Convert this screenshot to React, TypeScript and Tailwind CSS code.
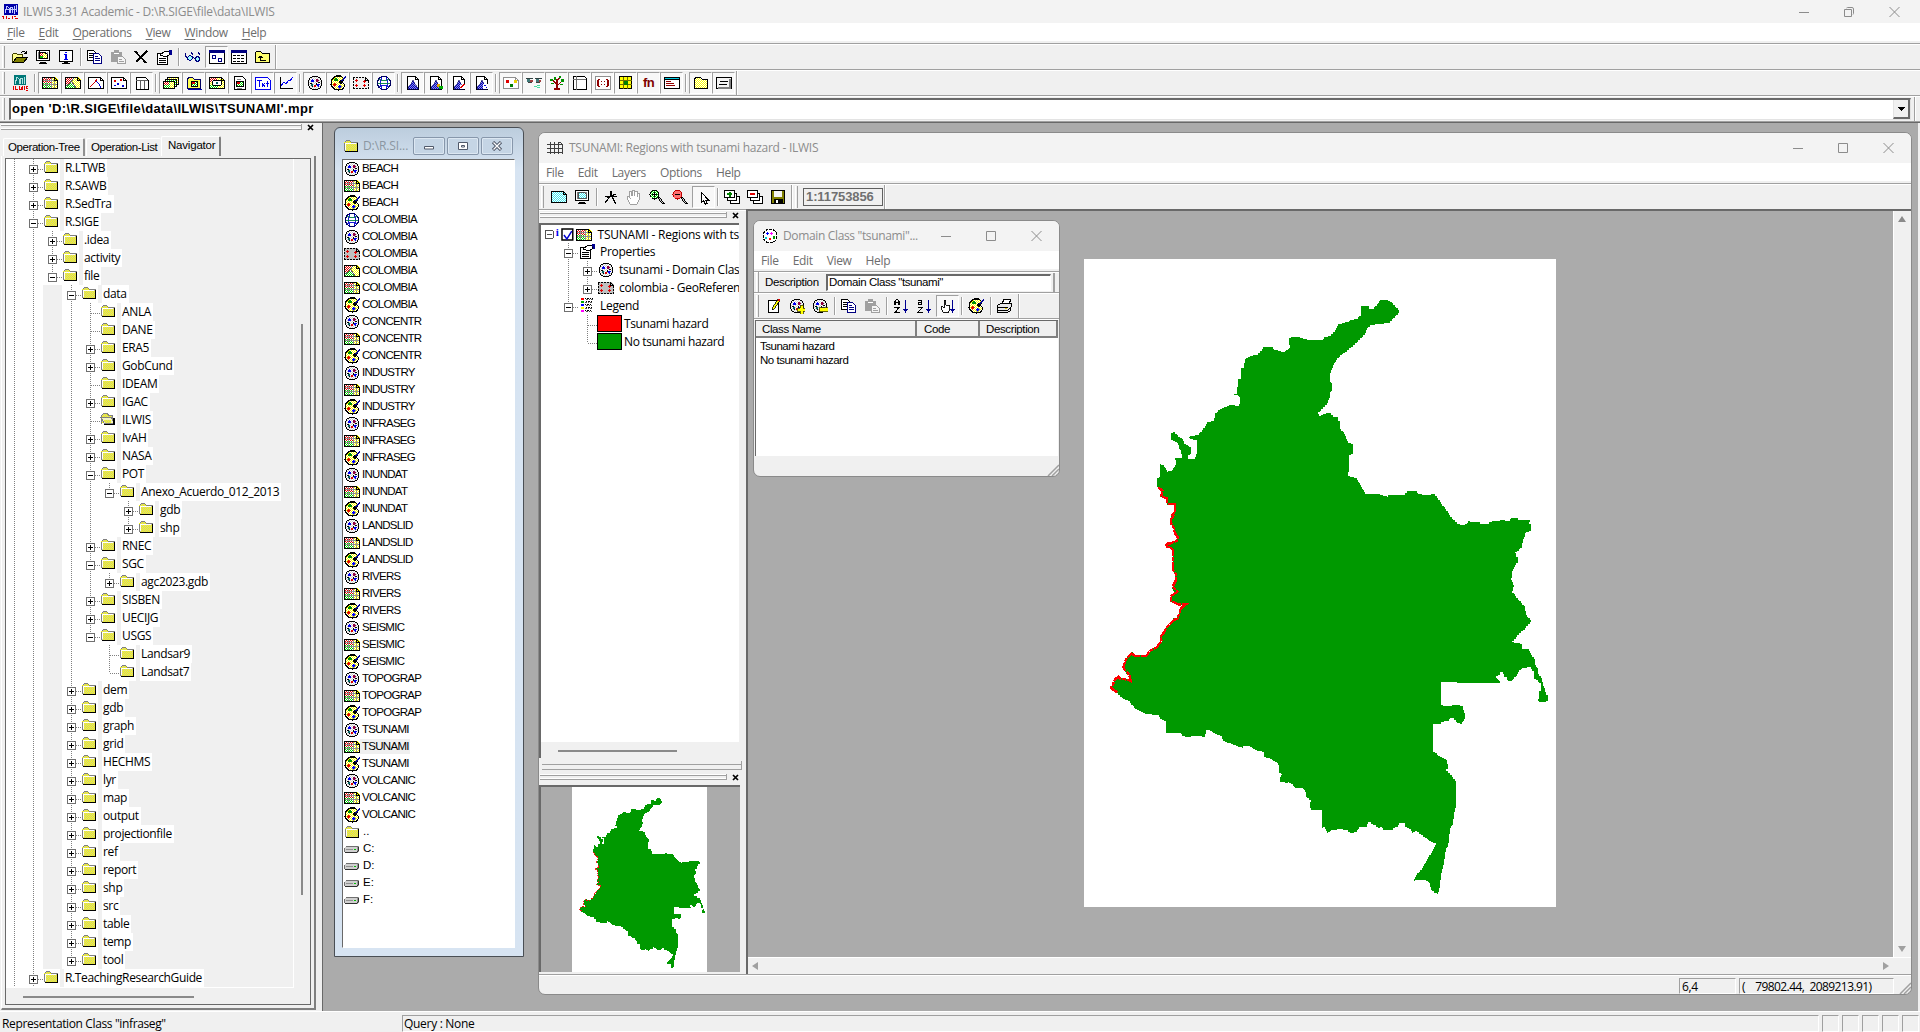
import React from "react";

type Kids = { children?: React.ReactNode };

/* ---------- shared pixel icon helpers ---------- */

function Ic({ w = 16, h = 16, children }: Kids & { w?: number; h?: number }) {
  return (
    <svg width={w} height={h} viewBox={`0 0 ${w} ${h}`} shapeRendering="crispEdges" className="block shrink-0" fill="none">
      {children}
    </svg>
  );
}

function Checker({ id, a, b }: { id: string; a: string; b: string }) {
  return (
    <pattern id={id} width="2" height="2" patternUnits="userSpaceOnUse">
      <rect width="2" height="2" fill={a} />
      <rect width="1" height="1" fill={b} />
      <rect x="1" y="1" width="1" height="1" fill={b} />
    </pattern>
  );
}

function Patterns() {
  return (
    <svg width="0" height="0" className="absolute">
      <defs>
        <Checker id="dy" a="#ffff00" b="#c8c8a0" />
        <Checker id="dyw" a="#ffff00" b="#ffffff" />
        <Checker id="dr" a="#e00000" b="#ffffff" />
        <Checker id="dg" a="#00d000" b="#ffffff" />
        <Checker id="db" a="#0000c0" b="#9090e0" />
        <Checker id="dc" a="#40e8f0" b="#ffffff" />
        <Checker id="dk" a="#d0d0d0" b="#ffffff" />
      </defs>
    </svg>
  );
}

const Folder = () => (
  <Ic>
    <path d="M1 4h1V3h5v1h1v1h6v8H1z" fill="url(#dy)" />
    <path d="M1.500 13V4.500M2 3.500h1M3 2.500h4M7 3.500h1M8 4.500h6.500" stroke="#808080" />
    <path d="M2.500 12V5.500H13" stroke="#fff" />
    <path d="M14 5h1v9H2v-1h12z" fill="#000" />
  </Ic>
);
const OpenFolder = () => (
  <Ic>
    <path d="M1.500 12.500V4.500L3.500 2.500H7.500L8.500 4.500H12.500V7" fill="url(#dy)" stroke="#808080" />
    <path d="M1 6.500H11.500L14.500 12.500H4.500z" fill="#f4f4c0" stroke="#808080" />
    <path d="M4 9h7v3H5z" fill="url(#dy)" />
    <path d="M13 7h2v7H4v-1h9z" fill="#000" />
  </Ic>
);
const Domain = ({ sign }: { sign?: string }) => (
  <Ic>
    <path d="M5 1h6v1h2v1h1v2h1v6h-1v2h-1v1h-2v1H5v-1H3v-1H2v-2H1V5h1V3h1V2h2z" fill="url(#dk)" />
    <path d="M5 1.500h6M3 2.500h2M11 2.500h2M2.500 3v2M13.500 3v2M1.500 5v6M14.500 5v6M2.500 11v2M13.500 11v2M3 13.500h2M11 13.500h2M5 14.500h6" stroke="#000" />
    <path d="M5 4h1v1h1v2H4V5h1zM10 9h3v1h-1v2h-1v-1h-1z" fill="#0000f0" />
    <path d="M9 4h2v1h1v1h-1v1H9z" fill="#900040" />
    <path d="M4 9h2v2H4z" fill="#006060" />
    <path d="M7 10h2v2H7z" fill="#e00000" />
    <path d="M3 8h2v1H3zM9 8h1v2H9zM11 7h2v1h-2zM5 11h1v1H5z" fill="#000" />
    {sign && <path d={sign === "+" ? "M8 10h3V7h3v3h2v3h-2v3h-3v-3H8z" : "M7 9.500h9v4H7z"} fill="#ffff00" stroke="#404000" strokeWidth=".8" />}
  </Ic>
);
const DomainWin = () => (
  <Ic>
    <circle cx="8" cy="8" r="7" fill="#fff" stroke="#000" strokeDasharray="3 1" />
    <path d="M4 5h3v1H4zM5 4h1v3H5z" fill="#00f" />
    <path d="M8 5h3v1H8zM9 4h1v3H9z" fill="#f0f" />
    <path d="M3 9h2v2H3z" fill="#0cc" />
    <path d="M7 10h2v2H7z" fill="#f00" />
    <path d="M11 8h2v3h-2z" fill="#090" />
  </Ic>
);
const Raster = () => (
  <Ic>
    <path d="M0 2h6v6H0z" fill="url(#dr)" />
    <path d="M0 8h6v6H0zM6 2h4v12H6z" fill="url(#dg)" />
    <path d="M6 2h3v6H6z" fill="url(#dr)" />
    <path d="M10 2h3l3 3v9h-6z" fill="url(#dyw)" />
    <path d="M4.500 3v10M9.500 3v10M12.500 3v10M1 5.500h14M1 9.500h14" stroke="#909090" />
    <path d="M.5 2.500H12.500L15.500 5.500V13.500H.5z" stroke="#000" />
    <path d="M12.500 2v3.500H16" stroke="#000" />
  </Ic>
);
const Polygon = () => (
  <Ic>
    <path d="M0 2h10L4 9l-4 2z" fill="url(#dr)" />
    <path d="M0 12l6-5 5 7H0z" fill="url(#dg)" />
    <path d="M9 2h4l3 3v9h-4L7 7z" fill="url(#dyw)" />
    <path d="M.5 11.500l4-3 5-6M6.500 6.500l5 7" stroke="#606060" />
    <path d="M.5 2.500H12.500L15.500 5.500V13.500H.5zM12.500 2v3.500H16" stroke="#000" />
  </Ic>
);
const Doc = ({ children, fill = "#fff", stroke = "#000" }: Kids & { fill?: string; stroke?: string }) => (
  <Ic>
    <path d="M.5 2.500H12.500L15.500 5.500V13.500H.5z" fill={fill} stroke={stroke} />
    <path d="M12.500 2v3.500H16" stroke={stroke} />
    {children}
  </Ic>
);
const Segment = () => (
  <Doc>
    <path d="M2 12l5-5 2-3" stroke="#d00000" strokeWidth="1.300" />
    <path d="M8 6l3 3 2 4" stroke="#0000d0" strokeWidth="1.300" />
  </Doc>
);
const Points = () => (
  <Doc>
    <path d="M3 5h2v2H3zM9 4h2v2H9z" fill="#e00000" />
    <path d="M6 8h2v2H6zM11 10h2v2h-2zM3 10h2v1H3z" fill="#0000d0" />
  </Doc>
);
const Table = () => (
  <Ic>
    <path d="M2.500 2.500H11.500L14.500 5.500V14.500H2.500z" fill="#fff" stroke="#000" />
    <path d="M2 5.500h12M6.500 5v9M10.500 5v9" stroke="#606060" />
  </Ic>
);
const MapList = () => (
  <Ic>
    <path d="M4.500 2.500H15.500V9.500H4.500z" fill="url(#dyw)" stroke="#000" />
    <path d="M2.500 4.500H13.500V11.500H2.500z" fill="url(#dg)" stroke="#000" />
    <path d="M.5 6.500H11.500V13.500H.5z" fill="url(#dg)" stroke="#000" />
    <path d="M1 7h5v3H1z" fill="url(#dr)" />
    <path d="M7 7h4v6H7z" fill="url(#dyw)" />
  </Ic>
);
const ObjFolder = () => (
  <Ic>
    <path d="M1.500 13.500V4.500L2.500 2.500H6.500L8.500 4.500H14.500V13.500z" fill="#ffff50" stroke="#000060" />
    <path d="M5.500 6.500H11.500V11.500H5.500z" fill="url(#dg)" stroke="#000" />
    <path d="M6 7h3v2H6z" fill="#e00000" />
    <path d="M2 14.500h14" stroke="#0000a0" />
  </Ic>
);
const MapView = () => (
  <Doc fill="url(#dyw)">
    <path d="M1 3h7v4H1z" fill="url(#dr)" />
    <path d="M1 10h8v3H1z" fill="url(#dg)" />
    <ellipse cx="8" cy="8" rx="5" ry="3" fill="#fff" stroke="#000" />
    <circle cx="8" cy="8" r="1.500" fill="#006060" />
  </Doc>
);
const Layout = () => (
  <Ic>
    <path d="M2.500 1.500H10.500L13.500 4.500V14.500H2.500z" fill="#fff" stroke="#000" />
    <path d="M4.500 6.500h7v5h-7z" fill="url(#dg)" stroke="#000" />
    <path d="M5 7h3v2H5z" fill="#e00000" />
    <path d="M5 4.500h4M5 13h5" stroke="#808080" />
  </Ic>
);
const Txt = () => (
  <Ic>
    <path d="M.5 2.500H12.500L15.500 5.500V14.500H.5z" fill="#fff" stroke="#0000f0" />
    <path d="M2 5.500h5M4.500 5v7M7 8l3 4M10 8l-3 4M12.500 6v6M11 8.500h3" stroke="#0000f0" />
  </Ic>
);
const Graph = () => (
  <Ic>
    <path d="M2.500 2v11.500H15" stroke="#000" />
    <path d="M3 11l3-4 2 2 3-4 1 1 3-4" stroke="#0000f0" />
  </Ic>
);
const Palette = () => (
  <Ic>
    <path d="M2 4l4-3h5l3 3-2 3 3 3-2 4-5 1-4-1-3-4z" fill="url(#dyw)" stroke="#000" strokeWidth="1.200" />
    <path d="M5 3h2v1h1v2H4V4h1z" fill="#009000" />
    <path d="M4 8h1v1h1v1H5v1H4v-1H3V9h1z" fill="#e00000" stroke="#e00000" strokeWidth=".6" />
    <path d="M9 10h1v1h1v1h-1v1H9v-1H8v-1h1z" fill="#0000f0" stroke="#0000f0" strokeWidth=".6" />
    <path d="M8 7l3-2 2 2-2 2z" fill="#000" />
    <path d="M12 6l4-5" stroke="#0000a0" strokeWidth="1.500" />
  </Ic>
);
const GeoRef = ({ fill = "#f0f0f0" }: { fill?: string }) => (
  <Ic>
    <path d="M0 2h13l3 3v9H0z" fill={fill} />
    <path d="M0 2.500h13M.5 3v11M0 13.500h16M15.500 6v8" stroke="#000" strokeDasharray="2 1" />
    <path d="M12.500 2v3.500H16M13 3.500h1M14 4.500h1" stroke="#000" />
    <path d="M2 5.500h3M3.500 4v3M10 6.500h3M11.500 5v3M2 10.500h3M3.500 9v3M10 10.500h3M11.500 9v3" stroke="#e00000" />
  </Ic>
);
const Globe = () => (
  <Ic>
    <circle cx="8" cy="8" r="6.600" fill="#fff" stroke="#000060" strokeWidth="1.200" />
    <path d="M6 2c-2 4-2 8 0 12M10 2c2 4 2 8 0 12" stroke="#0000d0" strokeWidth=".9" />
    <path d="M3 4c3 2 7 2 10 0M2 8.500h12" stroke="#008040" strokeWidth=".9" />
    <path d="M3 12c3-2 7-2 10 0" stroke="#0000d0" strokeWidth=".9" />
  </Ic>
);
const Histo = ({ v = 0 }: { v?: number }) => (
  <Ic>
    <path d="M2.500 1.500H10.500L13.500 4.500V14.500H2.500z" fill="#fff" stroke="#000" />
    <path d="M10.500 1v3.500H14" stroke="#000" />
    <path d="M3 12l3-3 2-4 2 4 3 4v1H3z" fill="url(#db)" stroke="#000060" strokeWidth=".6" />
    {v === 1 && <path d="M9 9h3v3H9z" fill="#e0a000" />}
    {v === 1 && <path d="M11 11h4v3h-4z" fill="#00b000" />}
    {v === 2 && <path d="M9 10h5v4H9z" fill="#fff" />}
    {v === 2 && <path d="M9 13l5-4" stroke="#e00000" strokeWidth="1.300" />}
    {v === 3 && <path d="M9 9h5v5H9z" fill="#fff" />}
    {v === 3 && <path d="M10 10h2v1h-2zM12 12h1v1h-1z" fill="#0000d0" />}
  </Ic>
);
const PointSet = () => (
  <Doc stroke="#909090">
    <path d="M3 5h3v3H3z" fill="#e00000" />
    <path d="M11 5h3v3h-3z" fill="#e8d000" />
    <path d="M7 9h3v3H7z" fill="#008000" />
  </Doc>
);
const Stereo = () => (
  <Ic>
    <path d="M0 3h7v1H0zM9 3h7v1H9z" fill="#304040" />
    <path d="M1 4h3v3H1zM10 4h3v3h-3z" fill="#407878" />
    <path d="M4 5h3v2H4zM13 5h2v2h-2z" fill="#a04040" />
    <path d="M2 7h4v1H2zM10 7h4v1h-4z" fill="#404040" />
    <path d="M8 11h3v1H8zM11 10h3v1h-3zM11 12h3v1h-3z" fill="#40e0a0" />
  </Ic>
);
const Tree = () => (
  <Ic>
    <path d="M8 15V4M8 9L3 5M8 11l5-5M8 6l3-4M5 14h6" stroke="#900000" strokeWidth="1.300" />
    <path d="M1 4h3v2H1zM5 2h2v3H5zM10 1h2v2h-2zM12 4h3v3h-3zM2 8h3v1H2zM11 9h3v1h-3z" fill="#009000" />
  </Ic>
);
const Table2 = () => (
  <Ic>
    <path d="M1.500 1.500H12.500L14.500 3.500V14.500H1.500z" fill="#fff" stroke="#000" />
    <path d="M1 4.500h13M4.500 1v14" stroke="#707070" />
  </Ic>
);
const Matrix = () => (
  <Ic>
    <path d="M.5 1.500h15v13H.5z" fill="#fff" stroke="#909090" />
    <path d="M3 4h2v1H4v6h1v1H3v-1H2V5h1zM11 4h2v1h1v6h-1v1h-2v-1h1V5h-1z" fill="#900000" />
    <path d="M6 6h1v1H6zM9 6h1v1H9zM6 9h1v1H6zM9 9h1v1H9z" fill="#900000" />
  </Ic>
);
const Filter = () => (
  <Ic>
    <path d="M1.500 1.500h12v12h-12z" fill="#ffff00" stroke="#000" />
    <path d="M5.500 2v12M9.500 2v12M2 5.500h12M2 9.500h12" stroke="#707000" />
    <path d="M6 6h4v4H6z" fill="#008000" />
  </Ic>
);
const Script = () => (
  <Ic>
    <path d="M.5 2.500h15v11H.5z" fill="#fff" stroke="#000" />
    <path d="M1 3h14v1H1z" fill="#00c8e0" />
    <path d="M1 4.500h14" stroke="#000" />
    <path d="M2 6.500h5M2 8.500h8M2 10.500h9" stroke="#900000" />
  </Ic>
);
const YellowFolder = () => (
  <Ic>
    <path d="M1.500 13.500V4.500L2.500 2.500H7.500L9.500 4.500H14.500V13.500z" fill="url(#dyw)" stroke="#000" />
  </Ic>
);
const Panel = () => (
  <Ic>
    <path d="M.5 2.500h15v11H.5z" fill="#f4f4f4" stroke="#000" />
    <path d="M14 4v9H2" stroke="#808080" strokeWidth="1.500" />
    <path d="M4 6.500h8M3 9.500h8" stroke="#000" />
  </Ic>
);
const Open = () => (
  <Ic>
    <path d="M.5 13.500V5.500L1.500 4.500H4.500L5.500 5.500H10.500V8" fill="#ffff90" stroke="#404000" />
    <path d="M1 13.500L4.500 8.500H15.500L11.500 13.500z" fill="#808000" stroke="#000" />
    <path d="M9 3.500h1M10 2.500h3M13 3.500h2M14.500 2v3M12 4.500h3" stroke="#000" />
  </Ic>
);
const Monitor = ({ children }: Kids) => (
  <Ic>
    <path d="M1.500 1.500h13v10h-13z" fill="#fff" stroke="#000" />
    <path d="M3.500 3.500h9v6h-9z" stroke="#808080" />
    <path d="M5 13.500h6M4 14.500h8" stroke="#000" />
    {children}
  </Ic>
);
const ShowMap = () => (
  <Monitor>
    <path d="M4 3h4v4H4z" fill="url(#dr)" />
    <path d="M8 3h4v6H8z" fill="url(#dyw)" />
    <path d="M4 7h4v2H4z" fill="#00c000" />
    <path d="M4.500 3v6.500H12V5L10 3.500z" stroke="#000" />
  </Monitor>
);
const InfoMon = () => (
  <Ic>
    <path d="M1.500 1.500h13v11h-13z" fill="#fff" stroke="#000" />
    <path d="M7 3h2v1H7zM6 5h3v5h1v1H6v-1h1V6H6z" fill="#0000f0" />
    <path d="M6 13.500h4M4 14.500h8" stroke="#000" />
  </Ic>
);
const Copy = () => (
  <Ic>
    <path d="M.5 1.500h6l2 2v8h-8z" fill="#fff" stroke="#000" />
    <path d="M2 4.500h4M2 6.500h4M2 8.500h4" stroke="#000" />
    <path d="M6.500 4.500h5l3 3v7h-8z" fill="#fff" stroke="#000080" />
    <path d="M8 7.500h3M8 9.500h5M8 11.500h5" stroke="#000080" />
  </Ic>
);
const Paste = () => (
  <Ic>
    <path d="M1 3h3V1h5v2h3v10H1z" fill="#a0a0a0" />
    <path d="M4 4h5" stroke="#fff" />
    <path d="M7.500 7.500h5l3 3v4h-8z" fill="#f4f4f4" stroke="#a0a0a0" />
    <path d="M9 10h3M9 12h5" stroke="#a0a0a0" />
  </Ic>
);
const Delete = () => (
  <Ic>
    <path d="M2 2l11 12M14 2L3 13" stroke="#000" strokeWidth="1.700" />
  </Ic>
);
const Props = () => (
  <Ic>
    <path d="M1.500 4.500h10v11h-10z" fill="#fff" stroke="#000" />
    <path d="M3 9.500h7M3 11.500h7M3 13.500h7" stroke="#000" />
    <path d="M4 6l5-4h4v4l-3 2-3-1z" fill="#fff" stroke="#000" />
    <path d="M13 1h3v5h-2z" fill="#000090" />
  </Ic>
);
const Glasses = () => (
  <Ic>
    <path d="M.5 4v3l3 4M8 6L6 3M15 6l-2-3M7 7l3 3" stroke="#000080" strokeWidth="1.200" />
    <circle cx="5" cy="9" r="2.300" fill="#a0ffff" stroke="#000080" />
    <circle cx="12.500" cy="10" r="2.300" fill="#a0ffff" stroke="#000080" />
  </Ic>
);
const IconsView = () => (
  <Ic>
    <path d="M.5 1.500h15v13H.5z" fill="#fff" stroke="#000" />
    <path d="M0 1h16v3H0z" fill="#000080" />
    <path d="M3.500 6.500h3v3h-3zM9.500 9.500h3v3h-3z" stroke="#000080" />
  </Ic>
);
const ListView = () => (
  <Ic>
    <path d="M.5 1.500h15v13H.5z" fill="#fff" stroke="#000" />
    <path d="M0 1h16v3H0z" fill="#000080" />
    <path d="M2 6.500h12M2 9.500h12M2 12.500h12" stroke="#000" strokeDasharray="3 1" />
  </Ic>
);
const UpFolder = () => (
  <Ic>
    <path d="M1.500 13.500V3.500L2.500 2.500H6.500L8.500 4.500H15.500V13.500z" fill="#ffff70" stroke="#000" />
    <path d="M6.500 7v4.500H12M4 8.500h5M5 7.500h3" stroke="#000" />
  </Ic>
);
const Logo = () => (
  <Ic>
    <rect width="14" height="11" x="2" fill="#0000a8" />
    <path d="M3 9l2-7 2 2v5M8 9V3h2v6M12 10V2M14 8V1M3 5h12" stroke="#c0c8ff" />
    <path d="M1 12v3M4 12v3M6 14.500h2M10 12v3M13 14.500h3M0 12.500h1M12 12.500h2" stroke="#e00000" />
  </Ic>
);
const LogoTool = () => (
  <Ic>
    <rect width="12" height="10" x="2" fill="#007878" />
    <path d="M3 9l2-7 2 2v5M8 9V3h2v6M12 9V2" stroke="#b0e0e0" />
    <path d="M1.500 11v4M3.500 11v3.500H6M7.500 11v3.500h3V11M9.500 12v2M12.500 11v4M16 11.500h-2v2h2v1.500h-2" stroke="#e00000" />
  </Ic>
);
const GridWin = () => (
  <Ic>
    <path d="M3.500 2v12M7.500 2v12M11.500 2v12M15.500 4v10M0 4.500h15M0 8.500h16M0 12.500h16M12 2.500h2M14 3.500h1" stroke="#404040" />
  </Ic>
);
const EntireMap = () => <Doc fill="url(#dc)" />;
const Redraw = () => (
  <Monitor>
    <path d="M4.500 3.500h6l2 2v4h-8z" fill="url(#dc)" stroke="#555" />
  </Monitor>
);
const Measure = () => (
  <Ic>
    <path d="M8 2v6M8 6l-6 8M8 6l5 9M2 7.500h12M4 9l9-4" stroke="#000" strokeWidth="1.200" />
  </Ic>
);
const Hand = () => (
  <Ic>
    <path d="M4 15l-3-6 1-2 2 2L3 3l2-1 1 5V1h2v6l1-5h2v6l1-4 2 1-1 6-2 4z" fill="#fff" stroke="#a0a0a0" />
  </Ic>
);
const Zoom = ({ plus }: { plus?: boolean }) => (
  <Ic>
    <path d="M9 8l6 7" stroke="#000" strokeWidth="2.300" />
    <path d="M10 9l4 5" stroke="#fff" strokeWidth=".8" />
    <circle cx="5.500" cy="5.500" r="4.500" fill={plus ? "url(#dg)" : "#ff7070"} stroke={plus ? "#000" : "#c00000"} />
    <path d={plus ? "M3 5.500h5M5.500 3v5" : "M3 5.500h5"} stroke="#000" strokeWidth="1.300" />
  </Ic>
);
const Cursor = () => (
  <Ic>
    <path d="M5.500 3.500v10l2-2 2 4 1.500-1-1.500-3.500h3z" fill="#fff" stroke="#000" />
  </Ic>
);
const Layers = ({ plus }: { plus?: boolean }) => (
  <Ic>
    <path d="M6.500 7.500h9v7h-9z" fill="#fff" stroke="#000" />
    <path d="M3.500 4.500h9v7h-9z" fill="#fff" stroke="#000" />
    <path d="M.5 1.500h10v7H.5z" fill="#fff" stroke="#000" />
    <path d={plus ? "M3 5h5M5.500 2.500v5" : "M3 5h5"} stroke={plus ? "#008000" : "#e00000"} strokeWidth="2" />
  </Ic>
);
const Save = () => (
  <Ic>
    <path d="M1.500 1.500h13v13h-13z" fill="#808000" stroke="#000" />
    <path d="M4 2h8v6H4z" fill="#f4f4f4" />
    <path d="M4 10h9v5H4z" fill="#000" />
    <path d="M6 11h2v3H6z" fill="#fff" />
  </Ic>
);
const Edit = () => (
  <Ic>
    <path d="M2.500 2.500h10v12h-10z" fill="#fff" stroke="#000" strokeWidth="1.200" />
    <path d="M6 12l1-3 5-8 2 1-5 8z" fill="#ffff00" stroke="#000" strokeWidth=".8" />
    <path d="M12 1h2v2h-2z" fill="#e00000" />
  </Ic>
);
const Arrow = () => <path d="M12 2h1v9h2v1h-1v1h-1v2h-1v-2h-1v-1h-1v-1h2z" fill="#000090" />;
const SortAZ = () => (
  <Ic>
    <path d="M2 7V3l2-2 2 2v4M2 4.500h4M1 9.500h5l-4 5h5" stroke="#000" strokeWidth="1.200" />
    <Arrow />
  </Ic>
);
const Sortaz = () => (
  <Ic>
    <path d="M2 2.500h3.500v4H2v-2h3M2 9.500h4l-4 5h4.500" stroke="#000" />
    <Arrow />
  </Ic>
);
const SortHand = () => (
  <Ic>
    <path d="M3 14l-2-5 1-1 2 2V2h1.500v5h4v5l-1 2z" fill="#fff" stroke="#000" strokeWidth=".9" />
    <Arrow />
  </Ic>
);
const Print = () => (
  <Ic>
    <path d="M5 6l2-5h7l-2 5" fill="#fff" stroke="#000" />
    <path d="M.5 7.500l3-2h11l-1 7-3 2H.5z" fill="#e8e8e8" stroke="#000" />
    <path d="M1 9.500h10M1 12h10l3-3" stroke="#000" />
    <path d="M8 10.500h2" stroke="#e8d000" />
  </Ic>
);
const Fn = () => <span className="pl-[2px] font-['Liberation_Sans'] text-[13px] font-bold leading-4 tracking-[-0.5px] text-[#800000]">fn</span>;
const LegendIcon = () => (
  <Ic>
    <path d="M2 1h3v2H2z" fill="#f00" />
    <path d="M2 4h3v2H2z" fill="#0a0" />
    <path d="M2 7h3v2H2z" fill="#00f" />
    <path d="M2 10h3v2H2z" fill="#ff0" />
    <path d="M2 13h3v2H2z" fill="#f0f" />
    <path d="M6 1.500h8M7 4.500h7M6 7.500h6M7 10.500h7M6 13.500h6" stroke="#000" strokeDasharray="1 1 2 1" />
    <path d="M7 2.500h7M6 5.500h7M7 8.500h6M6 11.500h7M7 14.500h6" stroke="#555" strokeDasharray="2 1 1 1" />
  </Ic>
);
const Drive = () => (
  <Ic>
    <path d="M1 6l2-1h12v5l-2 2H1z" fill="#989898" />
    <path d="M1 6h12v5H1z" fill="#d0d0d0" />
    <path d="M2 5.500h12M.5 7v4" stroke="#707070" />
    <path d="M1 11.500h12M14.500 6v4M13.500 10v1" stroke="#303030" />
    <path d="M2 8.500h7" stroke="#909090" />
    <path d="M10 8h2v1h-2z" fill="#00c000" />
  </Ic>
);

/* ---------- small UI parts ---------- */

const Line = () => <div className="h-[2px] shrink-0 border-b border-white bg-[#a0a0a0]" />;

function Btn({ on, children }: Kids & { on?: boolean }) {
  return (
    <div
      className={
        on
          ? "flex h-[22px] w-[23px] items-center border border-white border-t-[#a0a0a0] border-l-[#a0a0a0] bg-[#f8f8f8] pl-[3px]"
          : "flex h-[22px] w-[23px] items-center pl-[3px]"
      }
    >
      {children}
    </div>
  );
}

const Sep = () => (
  <div className="flex h-[18px] w-[6px] justify-center">
    <div className="w-[2px] border-r border-white bg-[#a0a0a0]" />
  </div>
);
const Grip = () => <div className="mr-[4px] ml-[2px] h-[22px] w-[3px] border-r border-l border-r-[#a0a0a0] border-l-white" />;
const End = () => <div className="ml-px h-full w-[2px] border-r border-white bg-[#a0a0a0]" />;

function PaneGrip() {
  return (
    <div className="flex h-[12px] items-center pb-[4px] pl-px">
      <div className="flex h-[6px] grow flex-col justify-between border-r border-[#a0a0a0]">
        <div className="h-[2px] border-t border-white bg-[#a0a0a0]" />
        <div className="h-[2px] border-t border-white bg-[#a0a0a0]" />
      </div>
      <svg width="7" height="7" viewBox="0 0 7 7" className="mr-[7px] ml-[5px]">
        <path d="M1 1l5 5M6 1L1 6" stroke="#000" strokeWidth="1.700" />
      </svg>
    </div>
  );
}

function WinButtons({ restore, gap }: { restore?: boolean; gap: string }) {
  return (
    <div className={"ml-auto flex items-center " + gap}>
      <svg width="10" height="10" viewBox="0 0 10 10"><path d="M0 5.500h10" stroke="#8c8c8c" /></svg>
      <svg width="10" height="10" viewBox="0 0 10 10" fill="none">
        {restore ? (
          <path d="M.5 2.500h7v7h-7zM2.500 1q.5-.5 1-.5h4.500q1.500 0 1.500 1.500v4.500q0 .5-.5 1" stroke="#8c8c8c" />
        ) : (
          <path d="M.5.500h9v9h-9z" stroke="#8c8c8c" />
        )}
      </svg>
      <svg width="11" height="10" viewBox="0 0 11 10"><path d="M.5 0l10 10M10.500 0l-10 10" stroke="#8c8c8c" /></svg>
    </div>
  );
}

const ResizeGrip = () => (
  <svg width="12" height="12" viewBox="0 0 12 12" className="shrink-0">
    <path d="M1 12L12 1M5 12l7-7M9 12l3-3" stroke="#a0a0a0" strokeWidth="1.500" />
  </svg>
);

/* ---------- tree ---------- */

type Guide = "none" | "full" | "half";

function Connector({ guide, branch, box, first }: { guide: Guide; branch?: boolean; box?: string; first?: boolean }) {
  return (
    <svg width={first ? 18 : 19} height="18" viewBox={first ? "1 0 18 18" : "0 0 19 18"} shapeRendering="crispEdges" className="block shrink-0">
      {guide !== "none" && <path d={guide === "full" ? "M9.500 0v18" : "M9.500 0v10"} stroke="#808080" strokeDasharray="1 1" />}
      {branch && <path d="M10 10.500h9" stroke="#808080" strokeDasharray="1 1" />}
      {box && <path d="M5.500 6.500h8v8h-8z" fill="#fff" stroke="#707070" />}
      {box && <path d={box === "+" ? "M7 10.500h5M9.500 8v5" : "M7 10.500h5"} stroke="#000" />}
    </svg>
  );
}

type Node = [level: number, box: string, label: string];
const nodes: Node[] = [
  [1, "+", "R.LTWB"], [1, "+", "R.SAWB"], [1, "+", "R.SedTra"], [1, "-", "R.SIGE"],
  [2, "+", ".idea"], [2, "+", "activity"], [2, "-", "file"], [3, "-", "data"],
  [4, "", "ANLA"], [4, "", "DANE"], [4, "+", "ERA5"], [4, "+", "GobCund"], [4, "", "IDEAM"],
  [4, "+", "IGAC"], [4, "", "ILWIS"], [4, "+", "IvAH"], [4, "+", "NASA"], [4, "-", "POT"],
  [5, "-", "Anexo_Acuerdo_012_2013"], [6, "+", "gdb"], [6, "+", "shp"],
  [4, "+", "RNEC"], [4, "-", "SGC"], [5, "+", "agc2023.gdb"], [4, "+", "SISBEN"], [4, "+", "UECIJG"],
  [4, "-", "USGS"], [5, "", "Landsar9"], [5, "", "Landsat7"],
  [3, "+", "dem"], [3, "+", "gdb"], [3, "+", "graph"], [3, "+", "grid"], [3, "+", "HECHMS"],
  [3, "+", "lyr"], [3, "+", "map"], [3, "+", "output"], [3, "+", "projectionfile"], [3, "+", "ref"],
  [3, "+", "report"], [3, "+", "shp"], [3, "+", "src"], [3, "+", "table"], [3, "+", "temp"], [3, "+", "tool"],
  [1, "+", "R.TeachingResearchGuide"],
];

function continues(i: number, col: number) {
  if (col <= 1) return true;
  for (let j = i + 1; j < nodes.length; j++) {
    if (nodes[j][0] < col) return false;
    if (nodes[j][0] === col) return true;
  }
  return false;
}

function TreeRow({ i }: { i: number }) {
  const [level, box, label] = nodes[i];
  return (
    <div className="flex h-[18px] items-stretch">
      {Array.from({ length: level }, (_, c) => (
        <div key={c} className={c === 2 && i > 6 ? "bg-[#f0f0f0]" : "bg-white"}>
          <Connector first={c === 0} guide={continues(i, c) ? "full" : "none"} />
        </div>
      ))}
      <div className="bg-white">
        <Connector guide={continues(i, level) ? "full" : "half"} branch box={box} />
      </div>
      <div className="w-[17px] bg-white">{label === "ILWIS" ? <OpenFolder /> : <Folder />}</div>
      <div className="ml-[4px] bg-white pr-[2px] pl-px font-['Open_Sans'] text-[12px] leading-[17px] tracking-[-0.35px] whitespace-pre text-black">{label}</div>
    </div>
  );
}

function Navigator() {
  return (
    <div className="flex w-[322px] shrink-0 flex-col bg-[#f0f0f0]">
      <div className="pr-px"><PaneGrip /></div>
      <div className="flex h-[21px] items-end pl-[3px] font-['Liberation_Sans'] text-[11.5px] leading-none tracking-[-0.42px] whitespace-nowrap text-black">
        <div className="flex h-[18px] w-[82px] items-center rounded-t-[2px] border-t border-r-2 border-l border-t-white border-r-[#909090] border-l-white pl-[4px]">Operation-Tree</div>
        <div className="ml-px flex h-[18px] w-[75px] items-center rounded-t-[2px] border-t border-l border-white pl-[4px]">Operation-List</div>
        <div className="flex h-[20px] w-[60px] items-center rounded-t-[2px] border-t border-r-2 border-l border-t-white border-r-[#808080] border-l-white pb-px pl-[6px] tracking-[-0.2px]">Navigator</div>
      </div>
      <div className="mr-[6px] ml-px flex h-[854px] flex-col border-r-2 border-b-2 border-l border-r-[#808080] border-b-[#808080] border-l-white pt-[2px] pr-[3px] pb-[3px] pl-[3px]">
        <div className="flex grow flex-col border border-[#696969]">
          <div className="flex h-[829px]">
            <div className="w-[288px] overflow-hidden border-r border-b border-white">
              {nodes.map((_, i) => <TreeRow key={i} i={i} />)}
            </div>
            <div className="grow pt-[165px] pl-[7px]">
              <div className="h-[571px] w-[2px] bg-[#8a8a8a]" />
            </div>
          </div>
          <div className="pt-[8px] pl-[17px]">
            <div className="h-[2px] w-[171px] bg-[#8a8a8a]" />
          </div>
        </div>
      </div>
    </div>
  );
}

/* ---------- catalog window ---------- */

type Kind = "d" | "r" | "p" | "c" | "g" | "v" | "f" | "h";
const triple = (n: string): [Kind, string][] => [["d", n], ["r", n], ["p", n]];
const catalog: [Kind, string][] = [
  ...triple("BEACH"),
  ["c", "COLOMBIA"], ["d", "COLOMBIA"], ["g", "COLOMBIA"], ["v", "COLOMBIA"], ["r", "COLOMBIA"], ["p", "COLOMBIA"],
  ...["CONCENTR", "INDUSTRY", "INFRASEG", "INUNDAT", "LANDSLID", "RIVERS", "SEISMIC", "TOPOGRAP", "TSUNAMI", "VOLCANIC"].flatMap(triple),
  ["f", ".."], ["h", "C:"], ["h", "D:"], ["h", "E:"], ["h", "F:"],
];
const kindIcon: Record<Kind, React.ReactNode> = {
  d: <Domain />, r: <Raster />, p: <Palette />, c: <Globe />, g: <GeoRef fill="#c0c0c0" />, v: <Polygon />, f: <Folder />, h: <Drive />,
};

function MdiBtn({ children }: Kids) {
  return (
    <div className="flex h-[18px] w-[32px] items-center justify-center rounded-[2px] border border-[#8797ab] bg-[#c5d5e5] shadow-[inset_0_0_0_1px_#dce7f2]">
      <svg width="12" height="10" viewBox="0 0 12 10" fill="none">{children}</svg>
    </div>
  );
}

function Catalog() {
  return (
    <div className="absolute top-[4px] left-[11px] flex h-[830px] w-[190px] flex-col rounded-t-[6px] border border-[#4a4f55] bg-[#d7e4f2] bg-linear-to-b from-[#bccddd] via-[#d7e4f2] via-5% to-[#d7e4f2] pr-[8px] pb-[8px] pl-[7px]">
      <div className="flex h-[31px] items-center pt-[5px] pl-[1px]">
        <Folder />
        <span className="ml-[4px] w-[50px] font-['Open_Sans'] text-[12px] tracking-[-0.1px] text-[#8b96a1]">D:\R.SI...</span>
        <div className="flex gap-[2px]">
          <MdiBtn><path d="M1.500 5.500h9v2.500h-9z" fill="#fff" stroke="#50596a" /></MdiBtn>
          <MdiBtn><path d="M1.500 1.500h9v7h-9zM4.500 4.500h3v1.500h-3z" fill="#fff" stroke="#50596a" /></MdiBtn>
          <MdiBtn><path d="M2 1l8 8M10 1L2 9" stroke="#50596a" strokeWidth="3.200" /><path d="M2.500 1.500l7 7M9.500 1.500l-7 7" stroke="#fff" strokeWidth="1.200" /></MdiBtn>
        </div>
      </div>
      <div className="grow border border-white border-t-[#696969] border-l-[#696969] bg-white pl-px">
        {catalog.map(([k, n], i) => (
          <div key={i} className="flex h-[17px] items-center">
            {kindIcon[k]}
            <span
              className={
                i === 34
                  ? "bg-[#f0f0f0] pr-px pl-[2px] font-['Liberation_Sans'] text-[11.5px] leading-[15px] tracking-[-0.72px] text-black"
                  : k === "f" || k === "h"
                    ? "pr-px pl-[3px] font-['Liberation_Sans'] text-[11.5px] leading-[15px] text-black"
                    : "pr-px pl-[2px] font-['Liberation_Sans'] text-[11.5px] leading-[15px] tracking-[-0.72px] text-black"
              }
            >
              {n}
            </span>
          </div>
        ))}
      </div>
    </div>
  );
}

/* ---------- map drawing ---------- */

const outline =
  "900,150 918,150 936,160 948,175 957,183 954,195 940,207 930,219 873,225 861,240 855,255 830,280 800,305 780,320 768,335 760,350 750,375 750,395 756,402 755,422 750,430 748,450 740,465 724,482 715,492 718,498 735,491 748,489 760,500 774,503 775,512 780,515 780,538 792,552 804,578 819,582 819,612 807,617 807,660 804,678 828,685 837,700 855,731 895,732 905,736 920,740 925,735 970,735 982,724 1005,724 1010,730 1030,735 1060,733 1075,750 1095,778 1110,800 1130,822 1150,825 1165,814 1195,817 1200,822 1224,822 1226,816 1260,811 1285,812 1292,804 1312,804 1315,810 1350,811 1348,822 1353,828 1352,842 1338,850 1328,880 1325,893 1306,910 1308,922 1314,926 1313,940 1305,952 1296,968 1294,990 1302,1010 1297,1028 1308,1043 1322,1060 1335,1072 1337,1095 1345,1105 1353,1117 1350,1122 1296,1177 1325,1182 1327,1197 1345,1198 1357,1220 1364,1232 1364,1245 1373,1260 1373,1272 1386,1290 1390,1308 1397,1330 1398,1335 1404,1336 1404,1352 1398,1356 1377,1356 1374,1347 1378,1345 1377,1323 1384,1320 1382,1300 1363,1282 1362,1262 1352,1251 1326,1256 1310,1277 1300,1290 1285,1296 1280,1282 1273,1278 1268,1266 1260,1266 1260,1275 1248,1278 1250,1288 1258,1292 1260,1299 1134,1299 1130,1295 1100,1296 1083,1298 1083,1365 1088,1368 1135,1365 1146,1368 1152,1385 1155,1400 1152,1412 1145,1422 1132,1417 1122,1405 1112,1403 1108,1412 1083,1418 1083,1422 1059,1422 1059,1506 1080,1522 1102,1533 1103,1558 1098,1562 1115,1580 1128,1598 1128,1668 1122,1690 1120,1718 1110,1740 1105,1785 1098,1800 1090,1850 1083,1880 1078,1920 1073,1931 1066,1928 1053,1917 1050,1900 1045,1892 1028,1890 1000,1892 1012,1870 1030,1848 1045,1822 1068,1780 1048,1770 1040,1765 1028,1755 1012,1742 1000,1748 992,1738 975,1728 974,1720 960,1720 955,1730 942,1735 940,1740 912,1740 905,1730 900,1735 888,1725 878,1722 874,1716 865,1716 860,1730 838,1732 832,1745 815,1750 805,1740 785,1737 760,1740 743,1748 735,1732 725,1735 725,1680 695,1680 690,1668 692,1650 680,1640 676,1620 668,1615 646,1612 640,1602 628,1597 620,1598 600,1595 600,1580 606,1572 598,1565 595,1540 570,1525 553,1518 551,1505 535,1503 520,1495 510,1488 495,1488 490,1493 480,1490 458,1482 430,1472 425,1458 405,1450 390,1440 378,1441 375,1460 350,1458 320,1461 306,1455 303,1448 258,1448 258,1413 240,1405 238,1395 210,1393 195,1390 165,1375 150,1352 130,1345 110,1325 98,1320 90,1311 98,1305 105,1288 115,1280 120,1285 148,1290 150,1292 148,1275 135,1262 128,1255 133,1235 140,1222 155,1207 165,1215 200,1215 210,1200 230,1190 245,1172 240,1160 250,1150 262,1130 275,1118 280,1105 295,1100 303,1075 318,1065 295,1065 272,1052 272,1038 285,1028 276,1010 288,990 285,970 279,960 278,900 270,890 255,888 262,880 272,880 288,875 290,865 285,850 280,830 272,820 272,805 280,800 274,795 285,790 285,765 262,765 258,745 242,740 248,725 235,715 231,705 231,685 240,675 240,642 248,645 255,655 260,665 275,660 288,640 286,625 305,624 305,612 295,580 285,572 273,565 273,550 280,547 295,560 310,572 313,582 333,592 333,612 325,615 325,627 345,627 351,602 351,570 333,567 326,560 351,555 365,540 382,517 402,510 405,490 420,477 448,465 472,467 480,458 478,437 463,433 470,430 475,388 482,385 483,355 492,350 494,328 510,318 530,314 550,291 578,291 582,300 610,307 624,298 630,290 626,265 632,261 650,260 665,265 680,270 725,270 732,262 748,258 765,240 775,222 800,215 828,206 843,193 843,168 866,168 868,177 876,177 890,163";
const coast =
  "112,1327 98,1318 92,1311 98,1305 105,1288 115,1280 120,1286 148,1290 152,1293 148,1275 137,1262 130,1253 135,1235 142,1222 155,1211 165,1217 200,1217 210,1202 230,1192 245,1172 241,1162 250,1150 262,1130 275,1118 282,1110 293,1105 303,1075 318,1063 295,1063 273,1052 273,1038 292,1025 278,1010 288,990 287,970 279,960 279,900 272,892 255,888 264,880 272,880 290,873 293,862 285,850 280,830 273,820 273,808 280,798 276,795 284,788 284,762 262,762 260,745 244,738 247,722 235,712";

/* Snaps every outline segment to a square cell grid, as a raster map shows it. */
function snap(points: string, cell: number) {
  const p = points.split(" ").map((s) => s.split(",").map(Number));
  const q = (v: number) => Math.round(v / cell) * cell;
  const out: string[] = [];
  let py = q(p[0][1]);
  for (let i = 0; i < p.length; i++) {
    const [ax, ay] = p[i];
    const [bx, by] = p[(i + 1) % p.length];
    const n = Math.max(1, Math.ceil(Math.max(Math.abs(bx - ax), Math.abs(by - ay)) / (cell * 2)));
    for (let k = 0; k < n; k++) {
      const x = q(ax + ((bx - ax) * k) / n);
      const y = q(ay + ((by - ay) * k) / n);
      out.push(`${x},${py}`, `${x},${y}`);
      py = y;
    }
  }
  return out.join(" ");
}

function Colombia({ w, h, s, cell, dash }: { w: number; h: number; s: number; cell: number; dash: string }) {
  return (
    <svg width={w} height={h} viewBox="12 27 1416 1944" preserveAspectRatio="none" shapeRendering="crispEdges" className="block shrink-0 bg-white">
      <polygon points={snap(outline, cell)} fill="#009900" />
      <polyline points={coast} fill="none" stroke="#ff0000" strokeWidth={s} strokeDasharray={dash} />
    </svg>
  );
}

/* ---------- domain window ---------- */

const MenuBar = ({ items }: { items: string[] }) => (
  <div className="flex h-[18px] shrink-0 items-center gap-[14px] bg-white pt-[2px] pl-[7px] font-['Open_Sans'] text-[12px] tracking-[-0.33px] text-[#6d6d6d]">
    {items.map((m) => <span key={m}>{m}</span>)}
  </div>
);

function DomainWindow() {
  return (
    <div className="absolute top-[9px] left-[5px] flex h-[257px] w-[307px] flex-col overflow-hidden rounded-[7px] border border-[#8a8a8a] bg-[#f0f0f0]">
      <div className="flex h-[30px] shrink-0 items-center bg-[#f3f3f3] pr-[17px] pb-px pl-[8px]">
        <DomainWin />
        <span className="ml-[5px] font-['Open_Sans'] text-[12px] tracking-[-0.35px] whitespace-pre text-[#8c8c8c]">Domain Class "tsunami"...</span>
        <WinButtons gap="gap-[35px]" />
      </div>
      <MenuBar items={["File", "Edit", "View", "Help"]} />
      <div className="h-[2px] shrink-0" />
      <Line />
      <div className="flex h-[19px] shrink-0 items-center font-['Liberation_Sans'] text-[11.5px] tracking-[-0.42px] text-black">
        <Grip />
        <span className="ml-[2px] w-[61px] tracking-[-0.35px]">Description</span>
        <div className="flex h-[17px] w-[225px] items-center border-t-2 border-r border-b border-l-2 border-white border-t-[#696969] border-l-[#696969] bg-white pl-px">Domain Class "tsunami"</div>
        <div className="ml-[2px] h-full w-[2px] bg-[#a0a0a0]" />
      </div>
      <Line />
      <div className="flex h-[24px] shrink-0 items-center">
        <Grip />
        <Btn><Edit /></Btn><Btn><Domain sign="+" /></Btn><Btn><Domain sign="-" /></Btn>
        <Sep /><Btn><Copy /></Btn><Btn><Paste /></Btn>
        <Sep /><Btn><SortAZ /></Btn><Btn><Sortaz /></Btn><Btn on><SortHand /></Btn>
        <Sep /><Btn><Palette /></Btn><Sep /><Btn><Print /></Btn><End />
      </div>
      <Line />
      <div className="mx-px flex grow flex-col border-t border-l border-[#696969] bg-white font-['Liberation_Sans'] text-[11.5px] tracking-[-0.38px] text-black">
        <div className="flex h-[17px] shrink-0 bg-[#f0f0f0] leading-[16px]">
          <div className="w-[161px] border-r-2 border-b-2 border-[#808080] pl-[6px]">Class Name</div>
          <div className="w-[63px] border-r-2 border-b-2 border-[#808080] pl-[7px]">Code</div>
          <div className="grow border-r-2 border-b-2 border-[#808080] pl-[6px]">Description</div>
        </div>
        <div className="pt-px pl-[4px] leading-[14px] tracking-[-0.48px]">
          <div>Tsunami hazard</div>
          <div>No tsunami hazard</div>
        </div>
      </div>
      <div className="flex h-[20px] shrink-0 items-end justify-end"><ResizeGrip /></div>
    </div>
  );
}

/* ---------- map window ---------- */

function LegendPane() {
  const label = "font-['Open_Sans'] text-[12px] leading-[17px] whitespace-pre text-black";
  return (
    <div className="flex h-[535px] w-[200px] flex-col overflow-hidden border-t-2 border-l-2 border-[#696969] bg-white">
      <div className="flex h-[18px] items-center pt-px pl-[4px]">
        <svg width="9" height="9" viewBox="0 0 9 9" shapeRendering="crispEdges"><path d="M.5.500h8v8h-8zM2 4.500h5" fill="none" stroke="#505050" /></svg>
        <span className="w-[7px] pb-[4px] pl-[2px] font-['Liberation_Serif'] text-[11px] leading-none font-bold text-[#0000f0]">i</span>
        <svg width="13" height="13" viewBox="0 0 13 13"><path d="M1 1h11v11H1z" fill="#fff" stroke="#000" strokeWidth="1.500" /><path d="M3 7l3 4 5-8" fill="none" stroke="#0000d0" strokeWidth="1.500" /></svg>
        <span className="ml-[2px]"><Raster /></span>
        <span className={label + " ml-[6px] tracking-[-0.22px]"}>TSUNAMI - Regions with ts</span>
      </div>
      <div className="flex h-[18px] pl-[18px]"><Connector guide="full" branch box="-" /><span className="ml-px"><Props /></span><span className={label + " ml-[5px] tracking-[-0.3px]"}>Properties</span></div>
      <div className="flex h-[18px] pl-[18px]"><Connector guide="full" /><Connector guide="full" branch box="+" /><span className="ml-px pt-px"><Domain /></span><span className={label + " ml-[5px] tracking-[-0.25px]"}>tsunami - Domain Clas</span></div>
      <div className="flex h-[18px] pl-[18px]"><Connector guide="full" /><Connector guide="half" branch box="+" /><span className="ml-px pt-px"><GeoRef fill="#c0c0c0" /></span><span className={label + " ml-[5px] tracking-[-0.33px]"}>colombia - GeoReferen</span></div>
      <div className="flex h-[18px] pl-[18px]"><Connector guide="half" branch box="-" /><span className="ml-px"><LegendIcon /></span><span className={label + " ml-[5px] tracking-[-0.3px]"}>Legend</span></div>
      <div className="flex h-[18px] pl-[37px]"><Connector guide="full" branch /><div className="h-[17px] w-[25px] border border-black bg-[#ff0000]" /><span className={label + " ml-[2px] tracking-[-0.37px]"}>Tsunami hazard</span></div>
      <div className="flex h-[18px] pl-[37px]"><Connector guide="half" branch /><div className="h-[17px] w-[25px] border border-black bg-[#009900]" /><span className={label + " ml-[2px] tracking-[-0.37px]"}>No tsunami hazard</span></div>
      <div className="mt-auto h-[16px] bg-[#f0f0f0] pt-[8px] pl-[17px]"><div className="h-[2px] w-[119px] bg-[#8a8a8a]" /></div>
    </div>
  );
}

function MapWindow() {
  return (
    <div className="absolute top-[9px] left-[215px] flex h-[863px] w-[1374px] flex-col overflow-hidden rounded-[7px] border border-[#8a8a8a] bg-[#f0f0f0]">
      <div className="flex h-[30px] shrink-0 items-center bg-[#f3f3f3] pr-[17px] pl-[8px]">
        <GridWin />
        <span className="ml-[6px] font-['Open_Sans'] text-[12px] tracking-[-0.27px] text-[#8c8c8c]">TSUNAMI: Regions with tsunami hazard - ILWIS</span>
        <WinButtons gap="gap-[35px]" />
      </div>
      <MenuBar items={["File", "Edit", "Layers", "Options", "Help"]} />
      <div className="h-[2px] shrink-0" />
      <Line />
      <div className="flex h-[24px] shrink-0 items-center">
        <Grip />
        <Btn><EntireMap /></Btn><Btn><Redraw /></Btn><Sep />
        <Btn><Measure /></Btn><Btn><Hand /></Btn><Btn><Zoom plus /></Btn><Btn><Zoom /></Btn><Btn on><Cursor /></Btn><Sep />
        <Btn><Layers plus /></Btn><Btn><Layers /></Btn><Btn><Save /></Btn><End />
        <Grip />
        <div className="ml-px flex h-[18px] w-[80px] items-center border border-[#606060] pl-[2px] font-['Liberation_Sans'] text-[13px] font-bold tracking-[-0.1px] text-[#707070]">1:11753856</div>
        <End />
      </div>
      <div className="flex h-[765px] shrink-0">
        <div className="flex w-[207px] flex-col">
          <div className="h-[2px] border-b border-white bg-[#a0a0a0]" />
          <PaneGrip />
          <div className="flex"><LegendPane /></div>
          <div className="mt-[3px] mr-[4px] ml-[3px] h-[9px] border-r border-b border-[#a0a0a0]">
            <div className="h-[4px] border-b border-[#a0a0a0]" />
          </div>
          <div className="pt-[3px]"><PaneGrip /></div>
          <div className="flex h-[187px] w-[201px] justify-center border-t-2 border-l-2 border-[#696969] bg-[#ababab] pr-[2px]">
            <Colombia w={135} h={185} s={9} cell={10.5} dash="30 8 14 14" />
          </div>
        </div>
        <div className="flex grow flex-col border-t-2 border-l-2 border-[#696969]">
          <div className="flex h-[746px]">
            <div className="relative w-[1145px] bg-[#ababab] pt-[48px] pl-[336px]">
              <Colombia w={472} h={648} s={7} cell={3} dash="30 2 12 3" />
              <DomainWindow />
            </div>
            <div className="flex grow flex-col items-center justify-between border-l border-white pt-[5px] pr-px pb-[5px]">
              <svg width="8" height="7" viewBox="0 0 8 7"><path d="M4 0l4 6H0z" fill="#8a8a8a" /></svg>
              <svg width="8" height="7" viewBox="0 0 8 7"><path d="M0 1h8L4 7z" fill="#a0a0a0" /></svg>
            </div>
          </div>
          <div className="flex h-[17px] items-center justify-between border-t border-white pr-[22px] pl-[4px]">
            <svg width="7" height="8" viewBox="0 0 7 8"><path d="M6 0v8L0 4z" fill="#a0a0a0" /></svg>
            <svg width="7" height="8" viewBox="0 0 7 8"><path d="M1 0v8l6-4z" fill="#a0a0a0" /></svg>
          </div>
        </div>
      </div>
      <Line />
      <div className="flex grow items-center gap-[3px] font-['Open_Sans'] text-[12px] leading-none tracking-[-0.35px] text-black">
        <div className="mt-[2px] ml-[1140px] h-[16px] w-[57px] border border-white border-t-[#a0a0a0] border-l-[#a0a0a0] pt-[2px] pl-[2px]">6,4</div>
        <div className="mt-[2px] h-[16px] w-[155px] border border-white border-t-[#a0a0a0] border-l-[#a0a0a0] pt-[2px] pl-[2px] tracking-[-0.57px] whitespace-pre">(    79802.44,  2089213.91)</div>
        <div className="ml-auto self-end"><ResizeGrip /></div>
      </div>
    </div>
  );
}

/* ---------- application ---------- */

const menu = ["File", "Edit", "Operations", "View", "Window", "Help"];

export default function App() {
  return (
    <div className="flex h-[1032px] w-[1920px] flex-col overflow-hidden bg-[#f0f0f0]">
      <Patterns />
      <div className="flex h-[23px] shrink-0 items-center bg-[#f3f3f3] pr-[20px] pl-[2px]">
        <Logo />
        <span className="ml-[5px] font-['Open_Sans'] text-[12px] tracking-[-0.23px] text-[#8c8c8c]">ILWIS 3.31 Academic - D:\R.SIGE\file\data\ILWIS</span>
        <WinButtons restore gap="gap-[35px]" />
      </div>
      <div className="flex h-[18px] shrink-0 items-center gap-[14px] bg-white pt-px pl-[7px] font-['Open_Sans'] text-[12px] tracking-[-0.35px] text-[#6d6d6d]">
        {menu.map((m) => (
          <span key={m}><u className="underline-offset-2">{m[0]}</u>{m.slice(1)}</span>
        ))}
      </div>
      <div className="h-[2px] shrink-0" />
      <Line />
      <div className="flex h-[24px] shrink-0 items-center">
        <Grip />
        <Btn><Open /></Btn><Btn><ShowMap /></Btn><Btn><InfoMon /></Btn><Sep />
        <Btn><Copy /></Btn><Btn><Paste /></Btn><Btn><Delete /></Btn><Btn><Props /></Btn><Sep />
        <Btn><Glasses /></Btn><Btn on><IconsView /></Btn><Btn><ListView /></Btn><Btn><UpFolder /></Btn><End />
      </div>
      <Line />
      <div className="flex h-[24px] shrink-0 items-center">
        <Grip />
        <Btn><LogoTool /></Btn><Sep />
        <Btn on><Raster /></Btn><Btn on><Polygon /></Btn><Btn on><Segment /></Btn><Btn on><Points /></Btn><Btn on><Table /></Btn><Sep />
        <Btn on><MapList /></Btn><Btn on><ObjFolder /></Btn><Btn on><MapView /></Btn><Btn on><Layout /></Btn><Btn on><Txt /></Btn><Btn on><Graph /></Btn><Sep />
        <Btn on><Domain /></Btn><Btn on><Palette /></Btn><Btn on><GeoRef /></Btn><Btn on><Globe /></Btn><Sep />
        <Btn on><Histo /></Btn><Btn on><Histo v={1} /></Btn><Btn on><Histo v={2} /></Btn><Btn on><Histo v={3} /></Btn><Sep />
        <Btn on><PointSet /></Btn><Btn on><Stereo /></Btn><Btn on><Tree /></Btn><Btn on><Table2 /></Btn>
        <Btn on><Matrix /></Btn><Btn on><Filter /></Btn><Btn on><Fn /></Btn><Btn on><Script /></Btn><Sep />
        <Btn on><YellowFolder /></Btn><Btn on><Panel /></Btn><End />
      </div>
      <Line />
      <div className="flex h-[24px] shrink-0 items-center">
        <Grip />
        <div className="flex h-[22px] w-[1902px] items-center border-t-2 border-r border-b border-l-2 border-[#e3e3e3] border-t-[#696969] border-l-[#696969] bg-white">
          <span className="ml-px pb-[2px] font-['Liberation_Sans'] text-[13px] font-bold tracking-[0.38px] text-black">open 'D:\R.SIGE\file\data\ILWIS\TSUNAMI'.mpr</span>
          <div className="ml-auto flex h-full w-[17px] items-center justify-center border-r-2 border-b-2 border-l border-[#696969] border-l-[#e3e3e3] bg-[#f0f0f0]">
            <svg width="7" height="4" viewBox="0 0 7 4" shapeRendering="crispEdges"><path d="M0 0h7L3.500 4z" fill="#000" /></svg>
          </div>
        </div>
        <div className="ml-[3px] h-full w-[2px] border-r border-white bg-[#a0a0a0]" />
      </div>
      <div className="h-[2px] shrink-0 border-b border-[#696969] bg-[#a0a0a0]" />
      <div className="flex h-[888px] shrink-0">
        <Navigator />
        <div className="relative w-[1596px] border-l border-[#696969] bg-[#ababab]">
          <Catalog />
          <MapWindow />
        </div>
      </div>
      <div className="flex grow items-center gap-[3px] border-t border-white pt-[3px] font-['Open_Sans'] text-[12px] leading-none tracking-[-0.37px] text-black">
        <div className="w-[399px] pl-[2px]">Representation Class "infraseg"</div>
        <div className="flex h-[17px] w-[1417px] items-center border border-white border-t-[#a0a0a0] border-l-[#a0a0a0] pl-px tracking-[-0.3px]">Query : None</div>
        {[0, 1, 2, 3, 4].map((n) => (
          <div key={n} className="h-[17px] w-[17px] border border-white border-t-[#a0a0a0] border-l-[#a0a0a0]" />
        ))}
      </div>
    </div>
  );
}
